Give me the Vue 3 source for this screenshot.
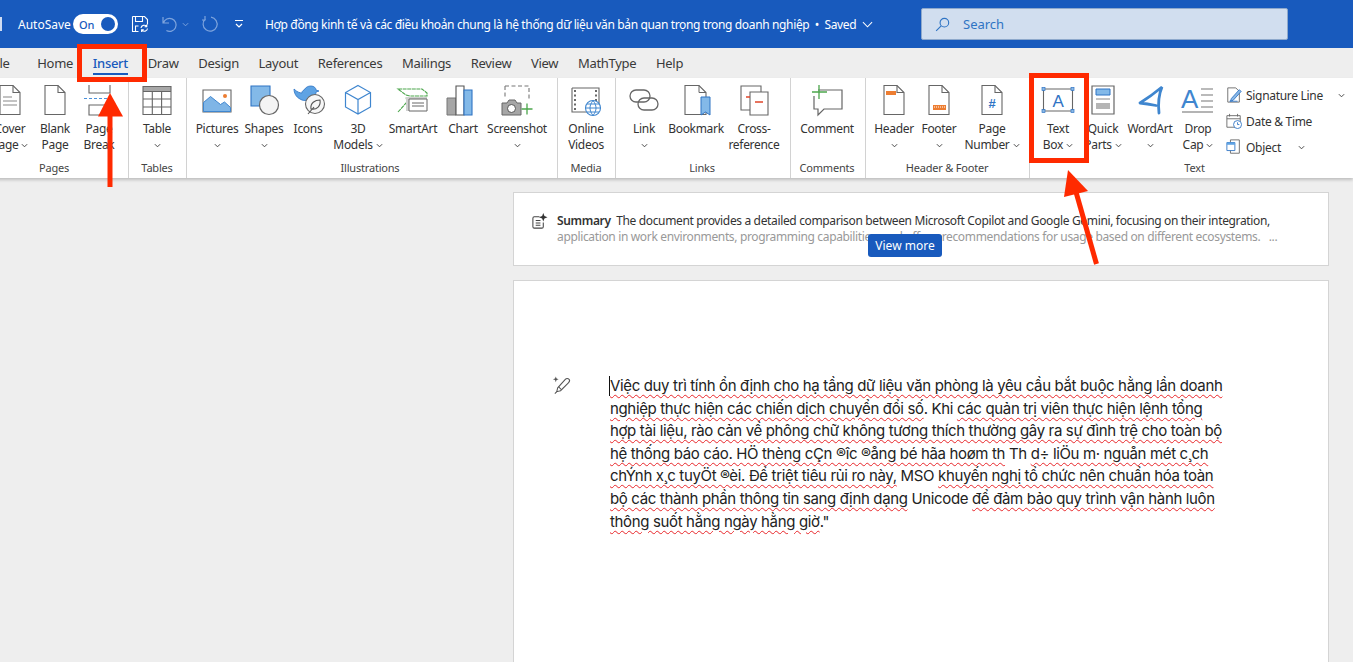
<template>
  <div class="word">
    <header class="titlebar">
      <span class="edge-icon"></span>
      <span class="autosave">AutoSave</span>
      <span class="toggle"><b>On</b><i></i></span>
      <svg class="qat save" viewBox="0 0 18 18" fill="none" stroke="#fff" stroke-width="1.1">
        <path d="M1.5 1.5h12l3 3v5M1.5 1.5v15h6M4.5 1.5v5h7v-5M4.5 16v-5h3" />
        <path d="M10 13a3.2 3.2 0 0 1 5.6-1.6M16.5 13.5a3.2 3.2 0 0 1-5.6 1.6M15.8 9.5v2.2h-2.2M10.6 17v-2.2h2.2" />
      </svg>
      <svg class="qat undo" viewBox="0 0 18 18" fill="none" stroke="#7ea4dd" stroke-width="1.2">
        <path d="M2 2v6h6M2.4 8a6.5 6.5 0 1 1 3 7.6" />
      </svg>
      <svg class="qat-mini" viewBox="0 0 8 5" fill="none" stroke="#7ea4dd" stroke-width="1.1"><path d="M1 1l3 3 3-3" /></svg>
      <svg class="qat redo" viewBox="0 0 18 18" fill="none" stroke="#7ea4dd" stroke-width="1.2">
        <path d="M10 2.2a7 7 0 1 1-5.4 1.6M4 1v4h-3" />
      </svg>
      <svg class="qat-more" viewBox="0 0 10 10" fill="none" stroke="#fff" stroke-width="1.2"><path d="M1 1.5h8M2 5l3 3 3-3" /></svg>
      <span class="doc-title">Hợp đồng kinh tế và các điều khoản chung là hệ thống dữ liệu văn bản quan trọng trong doanh nghiệp &nbsp;•&nbsp; Saved</span>
      <svg class="saved-chev" viewBox="0 0 12 7" fill="none" stroke="#fff" stroke-width="1.1"><path d="M1 1l5 5 5-5" /></svg>
      <div class="search">
        <svg viewBox="0 0 16 16" fill="none" stroke="#2f74c4" stroke-width="1.2"><circle cx="10" cy="6" r="4.6" /><path d="M6.6 9.4L1.2 14.8" /></svg>
        <span>Search</span>
      </div>
    </header>

    <nav class="tabs">
      <span v-for="t in tabs" :key="t" class="tab" :class="{ active: t === 'Insert' }">{{ t }}</span>
    </nav>

    <section class="ribbon">
      <div
        v-for="g in groups"
        :key="g.label"
        class="group"
        :style="{ paddingLeft: g.pl + 'px', paddingRight: g.pr + 'px', flexGrow: g.grow || 0 }"
      >
        <div class="group-items">
          <div v-for="b in g.items" :key="b.icon" class="rb" :style="{ width: b.w + 'px' }">
            <svg class="rb-icon" viewBox="0 0 32 32" v-html="icons[b.icon]"></svg>
            <span class="rb-line">{{ b.l1 }}</span>
            <span class="rb-line">
              {{ b.l2 }}
              <svg v-if="b.chev" class="chev" viewBox="0 0 8 5" fill="none" stroke="#444" stroke-width="1.1"><path d="M1 1l3 3 3-3" /></svg>
            </span>
          </div>
          <div v-if="g.small" class="small-list">
            <div v-for="s in g.small" :key="s.text" class="small-item">
              <svg class="small-icon" viewBox="0 0 18 18" v-html="icons[s.icon]"></svg>
              <span>{{ s.text }}</span>
              <svg v-if="s.gap" class="chev" :style="{ marginLeft: s.gap + 'px' }" viewBox="0 0 8 5" fill="none" stroke="#444" stroke-width="1.1"><path d="M1 1l3 3 3-3" /></svg>
            </div>
          </div>
        </div>
        <div class="group-label">{{ g.label }}</div>
      </div>
    </section>

    <main class="canvas">
      <div class="summary">
        <svg class="summary-icon" viewBox="0 0 18 18" fill="none" stroke="#444" stroke-width="1.1">
          <path d="M9 4H3.5A1.5 1.5 0 0 0 2 5.5v9A1.5 1.5 0 0 0 3.5 16h8a1.5 1.5 0 0 0 1.5-1.5V10" />
          <path d="M5 8h5M5 10.500h5M5 13h5" />
          <path d="M13 0l1.200 3.300L17.500 4.500l-3.300 1.200L13 9l-1.200-3.300L8.500 4.500l3.300-1.200z" fill="#333" stroke="none" />
        </svg>
        <p><b>Summary</b>&nbsp; The document provides a detailed comparison between Microsoft Copilot and Google Gemini, focusing on their integration,<br /><span class="faded">application in work environments, programming capabilities, and offers&nbsp; recommendations for usage based on different ecosystems. &nbsp; ...</span></p>
        <button class="view-more">View more</button>
      </div>

      <article class="page">
        <svg class="pen" viewBox="0 0 20 20" fill="none" stroke="#555" stroke-width="1.1">
          <path d="M5 17l1-4 8-9c1-1 3-1 4 0s0 3-1 4l-8 8z" />
          <path d="M5 17l-2 2M7 12l3 3" />
          <path d="M4 1l.8 2.2L7 4l-2.2.8L4 7l-.8-2.2L1 4l2.2-.8z" fill="#555" stroke="none" />
        </svg>
        <div class="body-text">
          <span class="caret"></span>
          <div v-for="(line, i) in lines" :key="i" class="line">
            <span v-for="(seg, j) in line" :key="j" :class="{ err: seg[1] }">{{ seg[0] }}</span>
          </div>
        </div>
      </article>
    </main>

    <!-- red annotations drawn on top of the screenshot -->
    <div class="mark mark-insert"></div>
    <div class="mark mark-textbox"></div>
    <svg class="arrows" viewBox="0 0 1353 662">
      <path d="M107.500 116h5v71h-5z" fill="#ff2a00" />
      <path d="M110 93l13 23.500h-25z" fill="#ff2a00" />
      <path d="M1096.500 264L1076 192" stroke="#ff2a00" stroke-width="5" fill="none" />
      <path d="M1068 170l20 21-24 6z" fill="#ff2a00" />
    </svg>
  </div>
</template>

<script setup>
const tabs = ['File', 'Home', 'Insert', 'Draw', 'Design', 'Layout', 'References', 'Mailings', 'Review', 'View', 'MathType', 'Help']

const page = 'fill="#fff" stroke="#666" stroke-width="1.1"'
const sheet = `<path d="M6 1.500h13l7 7v22H6z" ${page}/><path d="M19 1.500v7h7" fill="none" stroke="#666" stroke-width="1.1"/>`

const icons = {
  cover: `${sheet}<path d="M9 13h9M9 17h14M9 21h14" stroke="#888" stroke-width="1.2"/>`,
  blank: sheet,
  pagebreak: `<path d="M6 1v8h21V1M6 21v10h21V21H6z" fill="#fff" stroke="#666" stroke-width="1.1"/><path d="M1 14.500h30" stroke="#4a90d9" stroke-width="1.2" stroke-dasharray="3 2"/>`,
  table: `<path d="M2 2.500h28v5H2z" fill="#a6a6a6"/><path d="M2 2.500h28v28H2zM2 7.500h28M2 15h28M2 23h28M11.300 7.500v23M20.600 7.500v23" fill="#fff" fill-opacity=".01" stroke="#666" stroke-width="1.1"/>`,
  pictures: `<path d="M2 6h28v22H2z" fill="#fff" stroke="#666" stroke-width="1.1"/><path d="M2.500 27.500v-9l7-6 10 8 4-2.500 6 5.500v4z" fill="#7fb5e6" stroke="#3f86cf"/><circle cx="24" cy="12" r="2" fill="#ed7d31"/>`,
  shapes: `<path d="M3 2h19v20H3z" fill="#83b9e8" stroke="#2f74c4" stroke-width="1.1"/><circle cx="21" cy="21" r="9.500" fill="#f4f4f4" stroke="#666" stroke-width="1.2"/>`,
  bird: `<path d="M19 2c3 0 5 2 5 4l3 1-3 1c0 3-2 6-7 7-2 2-6 2-9 0-4-2-6-6-6-10 3 3 6 4 8 4 0-1 0-2 2-3 2-3 4-4 7-4z" fill="#5ea3e4" stroke="#2f74c4" stroke-width=".8"/><circle cx="23" cy="20" r="9.500" fill="#f7f7f7" stroke="#666" stroke-width="1.1"/><path d="M16 30l6-7M19 25c-1-6 4-9 9-9 1 6-3 10-9 9z" fill="none" stroke="#555" stroke-width="1.1"/>`,
  cube: `<path d="M16 1.500l12.500 7v14.500L16 30 3.500 23V8.500zM3.500 8.500L16 15.500l12.500-7M16 15.500V30" fill="#fff" stroke="#3f86cf" stroke-width="1.2"/>`,
  smartart: `<path d="M1 5h24l5 4v3H13l-4-1-8-6zM1 28l9-10-1-5" fill="#fff" stroke="#4ca64c" stroke-width="1.1" stroke-dasharray="4 .6"/><path d="M9 13h21v14H9z" fill="#d0d0d0"/><path d="M12 15h18v12H12zM15 19h12M15 22h12" fill="#fff" stroke="#666" stroke-width="1"/>`,
  chart: `<path d="M0 14h9v17H0z" fill="#a6a6a6" stroke="#777"/><path d="M9 2h8v29H9z" fill="#fff" stroke="#555" stroke-width="1.1"/><path d="M17 6h8v25h-8z" fill="#83b9e8" stroke="#2f74c4" stroke-width="1.1"/>`,
  screenshot: `<path d="M4 2h24v15M4 2v13" fill="none" stroke="#777" stroke-width="1.1" stroke-dasharray="4 2.500"/><path d="M1 19h5l2-3h6l2 3h4v12H1z" fill="#a6a6a6" stroke="#666"/><circle cx="10.500" cy="24.500" r="4" fill="#fff" stroke="#555"/><path d="M26 19.500v11M20.500 25h11" stroke="#4ca64c" stroke-width="1.3"/>`,
  video: `<path d="M2 4h27v19M2 4v24h17" fill="#fff" stroke="#666" stroke-width="1.1"/><path d="M5 6v20M26 6v12" stroke="#444" stroke-width="1.6" stroke-dasharray="2 2.500"/><circle cx="23" cy="24" r="7.500" fill="#fff" stroke="#3f86cf" stroke-width="1.1"/><path d="M15.500 24h15M23 16.500c-4 5-4 10 0 15 4-5 4-10 0-15zM17 20h12M17 28h12" fill="none" stroke="#3f86cf" stroke-width="1"/>`,
  link: `<g fill="none" stroke="#666" stroke-width="1.300"><rect x="2" y="6" width="20" height="12" rx="6"/><rect x="10" y="14" width="20" height="12" rx="6"/></g>`,
  bookmark: `<path d="M5 1.500h14l7 7v22H5z" ${page}/><path d="M19 1.500v7h7" fill="none" stroke="#666"/><path d="M21 13h9v18l-4.500-3-4.500 3z" fill="#83b9e8" stroke="#2f74c4"/>`,
  cross: `<path d="M3 2h20v24H3z" fill="#fff" stroke="#666" stroke-width="1.1"/><path d="M12 8h18v23H12z" fill="#fff" stroke="#666" stroke-width="1.1"/><path d="M8 13h4M17 18h8" stroke="#e0452a" stroke-width="1.3"/>`,
  comment: `<path d="M7 6h24v19H13l-6 6v-6H3V12" fill="#fff" stroke="#666" stroke-width="1.2"/><path d="M8 1v14M1 8h15" stroke="#4ca64c" stroke-width="1.3"/>`,
  header: `${sheet}<path d="M8 7h10v4H8z" fill="#ed7d31"/>`,
  footer: `${sheet}<path d="M10 21h13v5H10z" fill="#ed7d31"/><path d="M11 23h11" stroke="#fff" stroke-dasharray="1 1"/>`,
  pagenum: `${sheet}<text x="16" y="24" text-anchor="middle" font-family="Liberation Sans" font-size="13" font-weight="700" fill="#2f74c4">#</text>`,
  textbox: `<path d="M1.500 5h29v22h-29z" fill="#fff" stroke="#666" stroke-width="1.1"/><g fill="#8ab8e6" stroke="#2f74c4" stroke-width=".7"><rect x="0" y="3.500" width="3" height="3"/><rect x="29" y="3.500" width="3" height="3"/><rect x="0" y="25.500" width="3" height="3"/><rect x="29" y="25.500" width="3" height="3"/></g><text x="16" y="23" text-anchor="middle" font-family="Liberation Sans" font-size="17" fill="#2f74c4">A</text>`,
  quick: `<path d="M5 2h22v28H5z" fill="#fff" stroke="#666" stroke-width="1.2"/><path d="M9 5h14v6H9z" fill="#83b9e8" stroke="#2f74c4"/><path d="M9 15h14" stroke="#888"/><path d="M9 19h14v6H9z" fill="#b5b5b5"/>`,
  wordart: `<path d="M6 19C14 14 22 8 28 3c-3 7-4 17-3 26M6 19c5 .5 11 1.500 16 2.500" fill="none" stroke="#3f86cf" stroke-width="2.800" stroke-linecap="round"/>`,
  dropcap: `<text x="-1" y="24" font-family="Liberation Sans" font-size="26" fill="#3f86cf">A</text><path d="M19 5h12M19 11h12M19 17h12M19 23h12" stroke="#777" stroke-width="1.1"/><path d="M0 28h31" stroke="#777" stroke-width="1.1"/>`,
  sig: `<path d="M2 1h9l4 4v12H2z" fill="#fff" stroke="#666"/><path d="M6 13L15 3l2 2-9 10-3 1zM4 16h9" fill="#8ab8e6" stroke="#2f74c4"/>`,
  date: `<path d="M1 3h15v13H1zM1 6.500h15M4 1v3M13 1v3" fill="#fff" stroke="#666"/><circle cx="13" cy="13" r="4.500" fill="#fff" stroke="#2f74c4"/><path d="M13 10.500V13h2" fill="none" stroke="#2f74c4"/>`,
  object: `<path d="M5 1h10v15H5z" fill="#fff" stroke="#666"/><path d="M1 4h9v9H1z" fill="#fff" stroke="#2f74c4"/><path d="M1 4h9v2.500H1z" fill="#5ea3e4"/>`
}

const groups = [
  { label: 'Pages', pl: 0, pr: 8, items: [
    { icon: 'cover', w: 44, l1: 'Cover', l2: 'Page', chev: true },
    { icon: 'blank', w: 46, l1: 'Blank', l2: 'Page' },
    { icon: 'pagebreak', w: 42, l1: 'Page', l2: 'Break' }
  ] },
  { label: 'Tables', pl: 8, pr: 9, items: [
    { icon: 'table', w: 40, l1: 'Table', l2: '', chev: true }
  ] },
  { label: 'Illustrations', pl: 6, pr: 10, items: [
    { icon: 'pictures', w: 48, l1: 'Pictures', l2: '', chev: true },
    { icon: 'shapes', w: 46, l1: 'Shapes', l2: '', chev: true },
    { icon: 'bird', w: 42, l1: 'Icons', l2: '' },
    { icon: 'cube', w: 58, l1: '3D', l2: 'Models', chev: true },
    { icon: 'smartart', w: 52, l1: 'SmartArt', l2: '' },
    { icon: 'chart', w: 48, l1: 'Chart', l2: '' },
    { icon: 'screenshot', w: 60, l1: 'Screenshot', l2: '', chev: true }
  ] },
  { label: 'Media', pl: 0, pr: 1, items: [
    { icon: 'video', w: 56, l1: 'Online', l2: 'Videos' }
  ] },
  { label: 'Links', pl: 8, pr: 10, items: [
    { icon: 'link', w: 40, l1: 'Link', l2: '', chev: true },
    { icon: 'bookmark', w: 64, l1: 'Bookmark', l2: '' },
    { icon: 'cross', w: 52, l1: 'Cross-', l2: 'reference' }
  ] },
  { label: 'Comments', pl: 0, pr: 2, items: [
    { icon: 'comment', w: 72, l1: 'Comment', l2: '' }
  ] },
  { label: 'Header & Footer', pl: 6, pr: 7, items: [
    { icon: 'header', w: 44, l1: 'Header', l2: '', chev: true },
    { icon: 'footer', w: 46, l1: 'Footer', l2: '', chev: true },
    { icon: 'pagenum', w: 60, l1: 'Page', l2: 'Number', chev: true }
  ] },
  { label: 'Text', pl: 6, pr: 0, grow: 1, items: [
    { icon: 'textbox', w: 44, l1: 'Text', l2: 'Box', chev: true },
    { icon: 'quick', w: 46, l1: 'Quick', l2: 'Parts', chev: true },
    { icon: 'wordart', w: 48, l1: 'WordArt', l2: '', chev: true },
    { icon: 'dropcap', w: 48, l1: 'Drop', l2: 'Cap', chev: true }
  ], small: [
    { icon: 'sig', text: 'Signature Line', gap: 11 },
    { icon: 'date', text: 'Date & Time', gap: 0 },
    { icon: 'object', text: 'Object', gap: 13 }
  ] }
]

// [text, has a red spelling squiggle]
const lines = [
  [['Việc duy trì tính ổn định cho hạ tầng dữ liệu văn phòng là yêu cầu bắt buộc hằng lần doanh', true]],
  [['nghiệp thực hiện các chiến dịch chuyển đổi số', true], ['. Khi ', false], ['các quản trị viên thực hiện lệnh tổng', true]],
  [['hợp tài liệu, rào cản về phông chữ không tương thích thường gây ra sự đình trệ cho toàn bộ', true]],
  [['hệ thống báo cáo. HÖ thèng cÇn ®îc ®ång bé hãa hoøm th', true], [' Th ', false], ['d÷ liÖu m· nguån mét c¸ch', true]],
  [['chÝnh x¸c tuyÖt ®èi. Để triệt tiêu rủi ro này,', true], [' MSO ', false], ['khuyến nghị tổ chức nên chuẩn hóa toàn', true]],
  [['bộ các thành phần thông tin sang định dạng', true], [' Unicode ', false], ['để đảm bảo quy trình vận hành luôn', true]],
  [['thông suốt hằng ngày hằng giờ', true], ['."', false]]
]
</script>

<style>
html,
body {
  margin: 0;
  overflow: hidden;
}
</style>

<style scoped>
.word {
  position: relative;
  width: 1353px;
  height: 662px;
  overflow: hidden;
  background: #eeeeee;
  font-family: "Noto Sans", "Open Sans", sans-serif;
  color: #333;
}

.titlebar {
  display: flex;
  align-items: center;
  height: 48px;
  background: #185abd;
  color: #fff;
  font-size: 12px;
}

.edge-icon {
  width: 2px;
  height: 14px;
  background: #cfdcf2;
  margin-right: 16px;
}

.autosave {
  width: 55px;
}

.toggle {
  display: flex;
  align-items: center;
  justify-content: space-between;
  box-sizing: border-box;
  width: 45px;
  height: 20px;
  padding: 0 3px 0 6px;
  border-radius: 10px;
  background: #fff;
  margin-right: 13px;
}

.toggle b {
  font-weight: 500;
  font-size: 11px;
  color: #185abd;
}

.toggle i {
  width: 14px;
  height: 14px;
  border-radius: 50%;
  background: #185abd;
}

.qat {
  width: 18px;
  height: 18px;
  flex: none;
}

.save {
  margin-right: 12px;
}

.qat-mini {
  width: 7px;
  height: 5px;
  margin: 0 12px 0 3px;
}

.qat-more {
  width: 10px;
  height: 10px;
  margin-left: 15px;
  margin-right: 21px;
}

.doc-title {
  white-space: nowrap;
  width: 592px;
  font-size: 12px;
  letter-spacing: -0.36px;
}

.saved-chev {
  width: 11px;
  height: 7px;
  margin-left: 5px;
}

.search {
  display: flex;
  align-items: center;
  gap: 13px;
  box-sizing: border-box;
  width: 367px;
  height: 32px;
  margin-left: 48px;
  padding-left: 13px;
  background: #d1deef;
  border: 1px solid #8ea9cc;
  border-radius: 2px;
  color: #2f74c4;
  font-size: 13px;
}

.search svg {
  width: 15px;
  height: 15px;
}

.tabs {
  display: flex;
  align-items: center;
  gap: 19.7px;
  height: 30px;
  margin-left: -10px;
  font-size: 13px;
  letter-spacing: -0.3px;
  color: #3a3a3a;
}

.tab {
  position: relative;
}

.tab:first-child {
  margin-right: 8px;
}

.tab.active {
  color: #185abd;
  font-weight: 500;
}

.tab.active::after {
  content: "";
  position: absolute;
  left: 0;
  right: 0;
  bottom: -3px;
  height: 2px;
  background: #185abd;
}

.ribbon {
  display: flex;
  height: 100px;
  margin-left: -12px;
  background: #fff;
  box-shadow: 0 2px 3px rgba(0, 0, 0, 0.2);
  font-size: 12px;
  letter-spacing: -0.3px;
}

.group {
  position: relative;
  display: flex;
  flex-direction: column;
  border-right: 1px solid #d2d2d2;
  background-clip: padding-box;
}

.group:last-child {
  border-right: 0;
}

.group-items {
  display: flex;
  height: 83px;
  padding-top: 6px;
  box-sizing: border-box;
}

.group-label {
  text-align: center;
  font-size: 11px;
  line-height: 14px;
  color: #444;
  letter-spacing: -0.2px;
}

.rb {
  display: flex;
  flex-direction: column;
  align-items: center;
  white-space: nowrap;
}

.rb-icon {
  width: 32px;
  height: 32px;
  margin-bottom: 5px;
  overflow: visible;
}

.rb-line {
  display: flex;
  align-items: center;
  justify-content: center;
  gap: 3px;
  height: 16px;
  line-height: 16px;
}

.chev {
  width: 7px;
  height: 5px;
}

.small-list {
  display: flex;
  flex-direction: column;
  margin-left: 4px;
  margin-top: -2px;
}

.small-item {
  display: flex;
  align-items: center;
  gap: 4px;
  height: 26px;
  white-space: nowrap;
}

.small-icon {
  width: 16px;
  height: 16px;
}

.canvas {
  display: flex;
  flex-direction: column;
  gap: 14px;
  width: 816px;
  margin: 14px 0 0 513px;
}

.summary {
  position: relative;
  display: flex;
  box-sizing: border-box;
  height: 74px;
  padding: 20px 0 0 17px;
  background: #fff;
  border: 1px solid #d4d4d4;
}

.summary-icon {
  width: 17px;
  height: 17px;
  margin: 0 9px 0 0;
  flex: none;
}

.summary p {
  margin: 0;
  font-size: 12px;
  line-height: 16px;
  letter-spacing: -0.35px;
  white-space: nowrap;
}

.summary b {
  font-weight: 600;
}

.faded {
  color: #999;
}

.view-more {
  position: absolute;
  left: 354px;
  top: 41px;
  width: 74px;
  height: 23px;
  padding: 0;
  border: 0;
  border-radius: 3px;
  background: #185abd;
  color: #fff;
  font-family: inherit;
  font-size: 12px;
}

.page {
  position: relative;
  height: 400px;
  padding: 94px 0 0 96px;
  background: #fff;
  border: 1px solid #d4d4d4;
}

.pen {
  position: absolute;
  left: 38px;
  top: 94px;
  width: 19px;
  height: 20px;
}

.body-text {
  position: relative;
  font-family: Inter, "Noto Sans", sans-serif;
  font-size: 15px;
  line-height: 22.6px;
  letter-spacing: -0.35px;
  color: #222;
  white-space: nowrap;
}

.caret {
  position: absolute;
  left: -1px;
  top: 1px;
  width: 1px;
  height: 20px;
  background: #111;
}

.err {
  text-decoration: underline wavy #e8262a 1.2px;
  text-underline-offset: 3px;
}

.mark {
  position: absolute;
  box-sizing: border-box;
  border: 5px solid #ff2a00;
}

.mark-insert {
  left: 77px;
  top: 44px;
  width: 70px;
  height: 38px;
}

.mark-textbox {
  left: 1029px;
  top: 73px;
  width: 60px;
  height: 90px;
}

.arrows {
  position: absolute;
  left: 0;
  top: 0;
  width: 1353px;
  height: 662px;
  pointer-events: none;
}
</style>
